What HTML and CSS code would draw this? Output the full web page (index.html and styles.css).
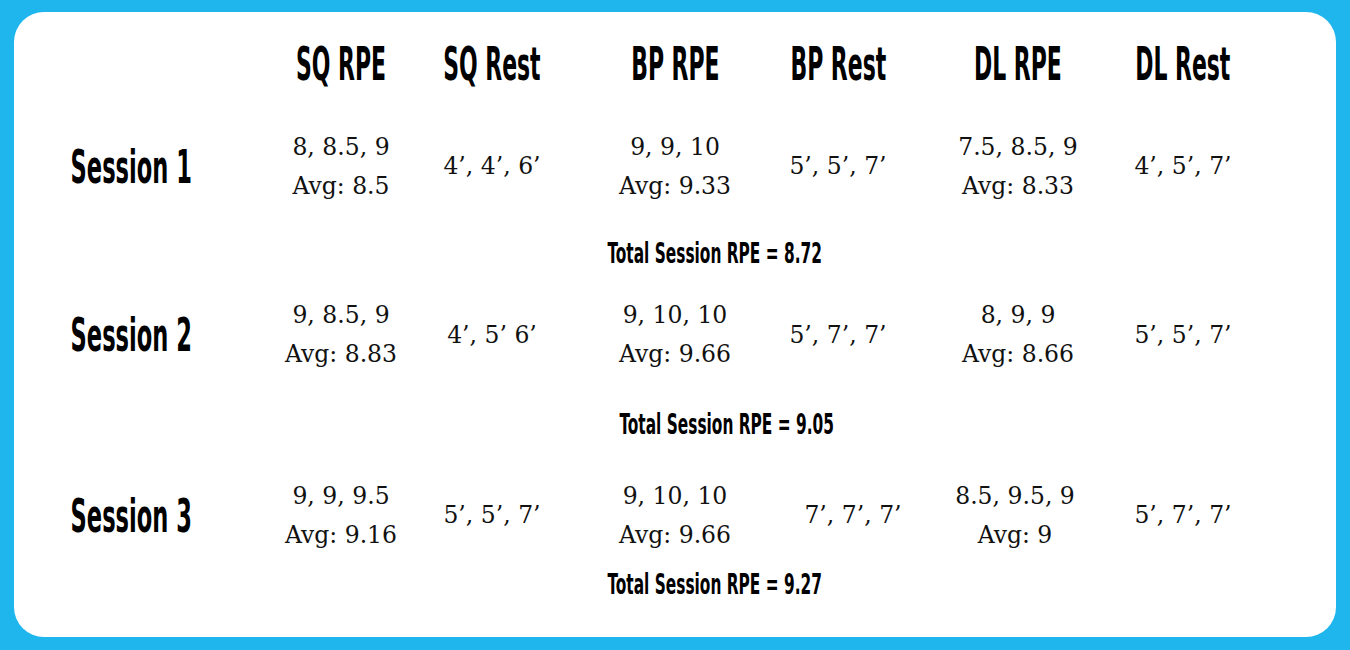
FILE: index.html
```html
<!DOCTYPE html>
<html lang="en">
<head>
<meta charset="utf-8">
<title>Session RPE</title>
<link rel="stylesheet" href="styles.css">
</head>
<body>
<main class="card">
  <div class="table">
    <div class="cell"></div>
    <div class="cell"><span class="head">SQ RPE</span></div>
    <div class="cell"><span class="head">SQ Rest</span></div>
    <div class="cell"><span class="head">BP RPE</span></div>
    <div class="cell"><span class="head">BP Rest</span></div>
    <div class="cell"><span class="head">DL RPE</span></div>
    <div class="cell"><span class="head">DL Rest</span></div>

    <div class="cell"><span class="head session">Session 1</span></div>
    <div class="cell val">8, 8.5, 9<br>Avg: 8.5</div>
    <div class="cell val">4’, 4’, 6’</div>
    <div class="cell val">9, 9, 10<br>Avg: 9.33</div>
    <div class="cell val">5’, 5’, 7’</div>
    <div class="cell val">7.5, 8.5, 9<br>Avg: 8.33</div>
    <div class="cell val">4’, 5’, 7’</div>
    <div class="cell total"><span class="tot">Total Session RPE = 8.72</span></div>

    <div class="cell"><span class="head session">Session 2</span></div>
    <div class="cell val">9, 8.5, 9<br>Avg: 8.83</div>
    <div class="cell val">4’, 5’ 6’</div>
    <div class="cell val">9, 10, 10<br>Avg: 9.66</div>
    <div class="cell val">5’, 7’, 7’</div>
    <div class="cell val">8, 9, 9<br>Avg: 8.66</div>
    <div class="cell val">5’, 5’, 7’</div>
    <div class="cell total total-b"><span class="tot">Total Session RPE = 9.05</span></div>

    <div class="cell"><span class="head session">Session 3</span></div>
    <div class="cell val">9, 9, 9.5<br>Avg: 9.16</div>
    <div class="cell val">5’, 5’, 7’</div>
    <div class="cell val">9, 10, 10<br>Avg: 9.66</div>
    <div class="cell val shift">7’, 7’, 7’</div>
    <div class="cell val nudge">8.5, 9.5, 9<br>Avg: 9</div>
    <div class="cell val">5’, 7’, 7’</div>
    <div class="cell total"><span class="tot">Total Session RPE = 9.27</span></div>
  </div>
</main>
</body>
</html>
```

FILE: styles.css
```css
html, body {
  margin: 0;
  padding: 0;
}
body {
  background: #1fb6ee;
  width: 1350px;
  height: 650px;
  padding: 12px 14px 0 14px;
  box-sizing: border-box;
}
.card {
  background: #ffffff;
  border-radius: 30px;
  height: 625px;
  overflow: hidden;
}
.table {
  display: grid;
  grid-template-columns: 234px 186px 116px 250px 76px 284px 46px;
  grid-template-rows: 103px 103px 70px 94px 84px 99px 38px;
  justify-items: center;
  align-items: center;
}
.cell {
  white-space: nowrap;
  text-align: center;
}
.head {
  display: inline-block;
  font-family: "DejaVu Sans Condensed", "DejaVu Sans", sans-serif;
  font-weight: bold;
  font-size: 46px;
  line-height: 1;
  color: #000;
  transform: scaleX(0.53);
}
.session {
  transform: scaleX(0.545);
}
.val {
  font-family: "DejaVu Serif", serif;
  font-size: 23.5px;
  line-height: 39px;
  color: #111;
}
.total {
  grid-column: 2 / -1;
  padding-right: 24px;
}
.total-b {
  padding-right: 0;
}
.tot {
  display: inline-block;
  font-family: "DejaVu Sans Condensed", "DejaVu Sans", sans-serif;
  font-weight: bold;
  font-size: 29px;
  line-height: 1;
  color: #000;
  transform: scaleX(0.59);
}
.shift {
  margin-left: 30px;
}
.nudge {
  margin-right: 6px;
}
```
